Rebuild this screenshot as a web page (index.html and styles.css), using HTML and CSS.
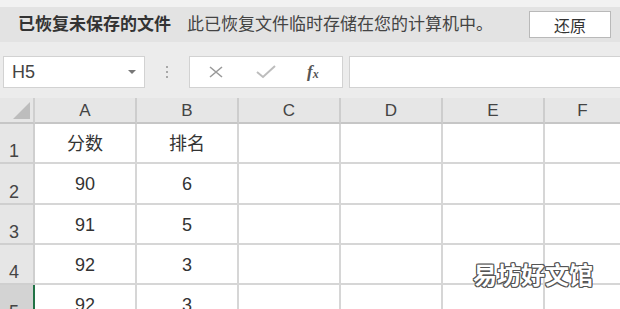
FILE: index.html
```html
<!DOCTYPE html>
<html lang="zh">
<head>
  <meta charset="UTF-8" />
  <title>已恢复未保存的文件</title>
  <link rel="stylesheet" href="styles.css">
</head>
<body>
  <div class="topstrip"></div>

  <div class="banner">
    <span class="banner-title">已恢复未保存的文件</span>
    <span class="banner-msg">此已恢复文件临时存储在您的计算机中。</span>
    <button class="restore">还原</button>
  </div>

  <div class="formula-bar">
    <div class="namebox">
      <span>H5</span>
      <span class="caret"></span>
    </div>
    <div class="dots"><i></i><i></i><i></i></div>
    <div class="fx-buttons">
      <svg class="ico-x" width="16" height="12" viewBox="0 0 16 12"><path d="M2 1 L14 11 M14 1 L2 11" stroke="#9a9a9a" stroke-width="1.6" fill="none"/></svg>
      <svg class="ico-ok" width="20" height="14" viewBox="0 0 20 14"><path d="M1 7 L7 12 L19 1" stroke="#bdbdbd" stroke-width="2" fill="none"/></svg>
      <span class="fx">f<sub>x</sub></span>
    </div>
    <div class="formula-input"></div>
  </div>

  <div class="sheet">
    <div class="corner"><span></span></div>
    <div class="colhead">A</div>
    <div class="colhead">B</div>
    <div class="colhead">C</div>
    <div class="colhead">D</div>
    <div class="colhead">E</div>
    <div class="colhead last">F</div>

    <div class="rowhead">1</div>
    <div class="cell">分数</div><div class="cell">排名</div><div class="cell"></div><div class="cell"></div><div class="cell"></div><div class="cell last"></div>

    <div class="rowhead">2</div>
    <div class="cell">90</div><div class="cell">6</div><div class="cell"></div><div class="cell"></div><div class="cell"></div><div class="cell last"></div>

    <div class="rowhead">3</div>
    <div class="cell">91</div><div class="cell">5</div><div class="cell"></div><div class="cell"></div><div class="cell"></div><div class="cell last"></div>

    <div class="rowhead">4</div>
    <div class="cell">92</div><div class="cell">3</div><div class="cell"></div><div class="cell"></div><div class="cell"></div><div class="cell last"></div>

    <div class="rowhead selected">5</div>
    <div class="cell">92</div><div class="cell">3</div><div class="cell"></div><div class="cell"></div><div class="cell"></div><div class="cell last"></div>

    <div class="watermark">易坊好文馆</div>
  </div>
</body>
</html>
```

FILE: styles.css
```css
body {
  margin: 0;
  width: 620px;
  height: 309px;
  overflow: hidden;
  background: #ececec;
  font-family: "Liberation Sans", "Noto Sans CJK SC", sans-serif;
  color: #333;
}
.topstrip {
  height: 7px;
  background: #f2f2f2;
}
.banner {
  height: 35px;
  background: #e3e3e3;
  display: flex;
  align-items: center;
  padding-left: 18px;
  font-size: 17px;
  line-height: 20px;
}
.banner-title {
  font-weight: bold;
  color: #333;
}
.banner-msg {
  margin-left: 16px;
  color: #444;
}
.restore {
  margin-left: 36px;
  width: 82px;
  height: 27px;
  background: #fff;
  border: 1px solid #b9b9b9;
  font-family: inherit;
  font-size: 16px;
  color: #333;
  padding: 0;
}
.formula-bar {
  height: 32px;
  padding: 14px 0 10px 3px;
  display: flex;
  align-items: stretch;
  background: #ececec;
}
.namebox {
  width: 142px;
  box-sizing: border-box;
  background: #fff;
  border: 1px solid #d2d2d2;
  display: flex;
  align-items: center;
  justify-content: space-between;
  padding: 0 8px 0 8px;
  font-size: 18px;
  color: #444;
}
.caret {
  width: 0;
  height: 0;
  border-left: 4px solid transparent;
  border-right: 4px solid transparent;
  border-top: 4px solid #777;
}
.dots {
  width: 44px;
  display: flex;
  flex-direction: column;
  align-items: center;
  justify-content: center;
  gap: 3px;
}
.dots i {
  width: 2px;
  height: 2px;
  background: #a8a8a8;
}
.fx-buttons {
  width: 154px;
  box-sizing: border-box;
  background: #fff;
  border: 1px solid #d2d2d2;
  display: flex;
  align-items: center;
  padding-left: 18px;
}
.ico-ok {
  margin-left: 32px;
}
.fx {
  margin-left: 31px;
  font-family: "Liberation Serif", serif;
  font-style: italic;
  font-weight: bold;
  font-size: 17px;
  color: #555;
}
.fx sub {
  font-size: 12px;
  vertical-align: -1px;
}
.formula-input {
  flex: 1;
  margin-left: 6px;
  background: #fff;
  border: 1px solid #d2d2d2;
  border-right: none;
}
.sheet {
  position: relative;
  display: grid;
  grid-template-columns: 35px 102px 102px 102px 102px 102px 1fr;
  grid-template-rows: 26px repeat(5, 40.3px);
  background: #fff;
}
.corner {
  background: #e6e6e6;
  border-right: 2px solid #cfcfcf;
  border-bottom: 2px solid #c6c6c6;
  position: relative;
}
.corner span {
  position: absolute;
  right: 3px;
  bottom: 3px;
  width: 0;
  height: 0;
  border-left: 17px solid transparent;
  border-bottom: 17px solid #bdbdbd;
}
.colhead {
  background: #e6e6e6;
  border-right: 2px solid #cdcdcd;
  border-bottom: 2px solid #c6c6c6;
  display: flex;
  align-items: flex-end;
  justify-content: center;
  font-size: 17px;
  line-height: 20px;
  padding-bottom: 1px;
  color: #444;
}
.colhead.last {
  border-right: none;
}
.rowhead {
  background: #e6e6e6;
  border-right: 2px solid #cfcfcf;
  border-bottom: 2px solid #cfcfcf;
  display: flex;
  align-items: flex-end;
  padding: 0 0 1px 9px;
  font-size: 18px;
  line-height: 20px;
  color: #444;
}
.rowhead.selected {
  background: #d3d3d3;
  border-right: 2px solid #217346;
}
.cell {
  border-right: 2px solid #d6d6d6;
  border-bottom: 2px solid #d6d6d6;
  display: flex;
  align-items: center;
  justify-content: center;
  padding-top: 2px;
  font-size: 18px;
  line-height: 22px;
  color: #333;
}
.cell.last {
  border-right: none;
}
.watermark {
  position: absolute;
  left: 473px;
  top: 164px;
  font-size: 24px;
  line-height: 28px;
  font-weight: bold;
  color: #fff;
  text-shadow: 1px 0 #555, -1px 0 #555, 0 1px #555, 0 -1px #555,
    1px 1px #555, -1px -1px #555, 1px -1px #555, -1px 1px #555;
}
```
